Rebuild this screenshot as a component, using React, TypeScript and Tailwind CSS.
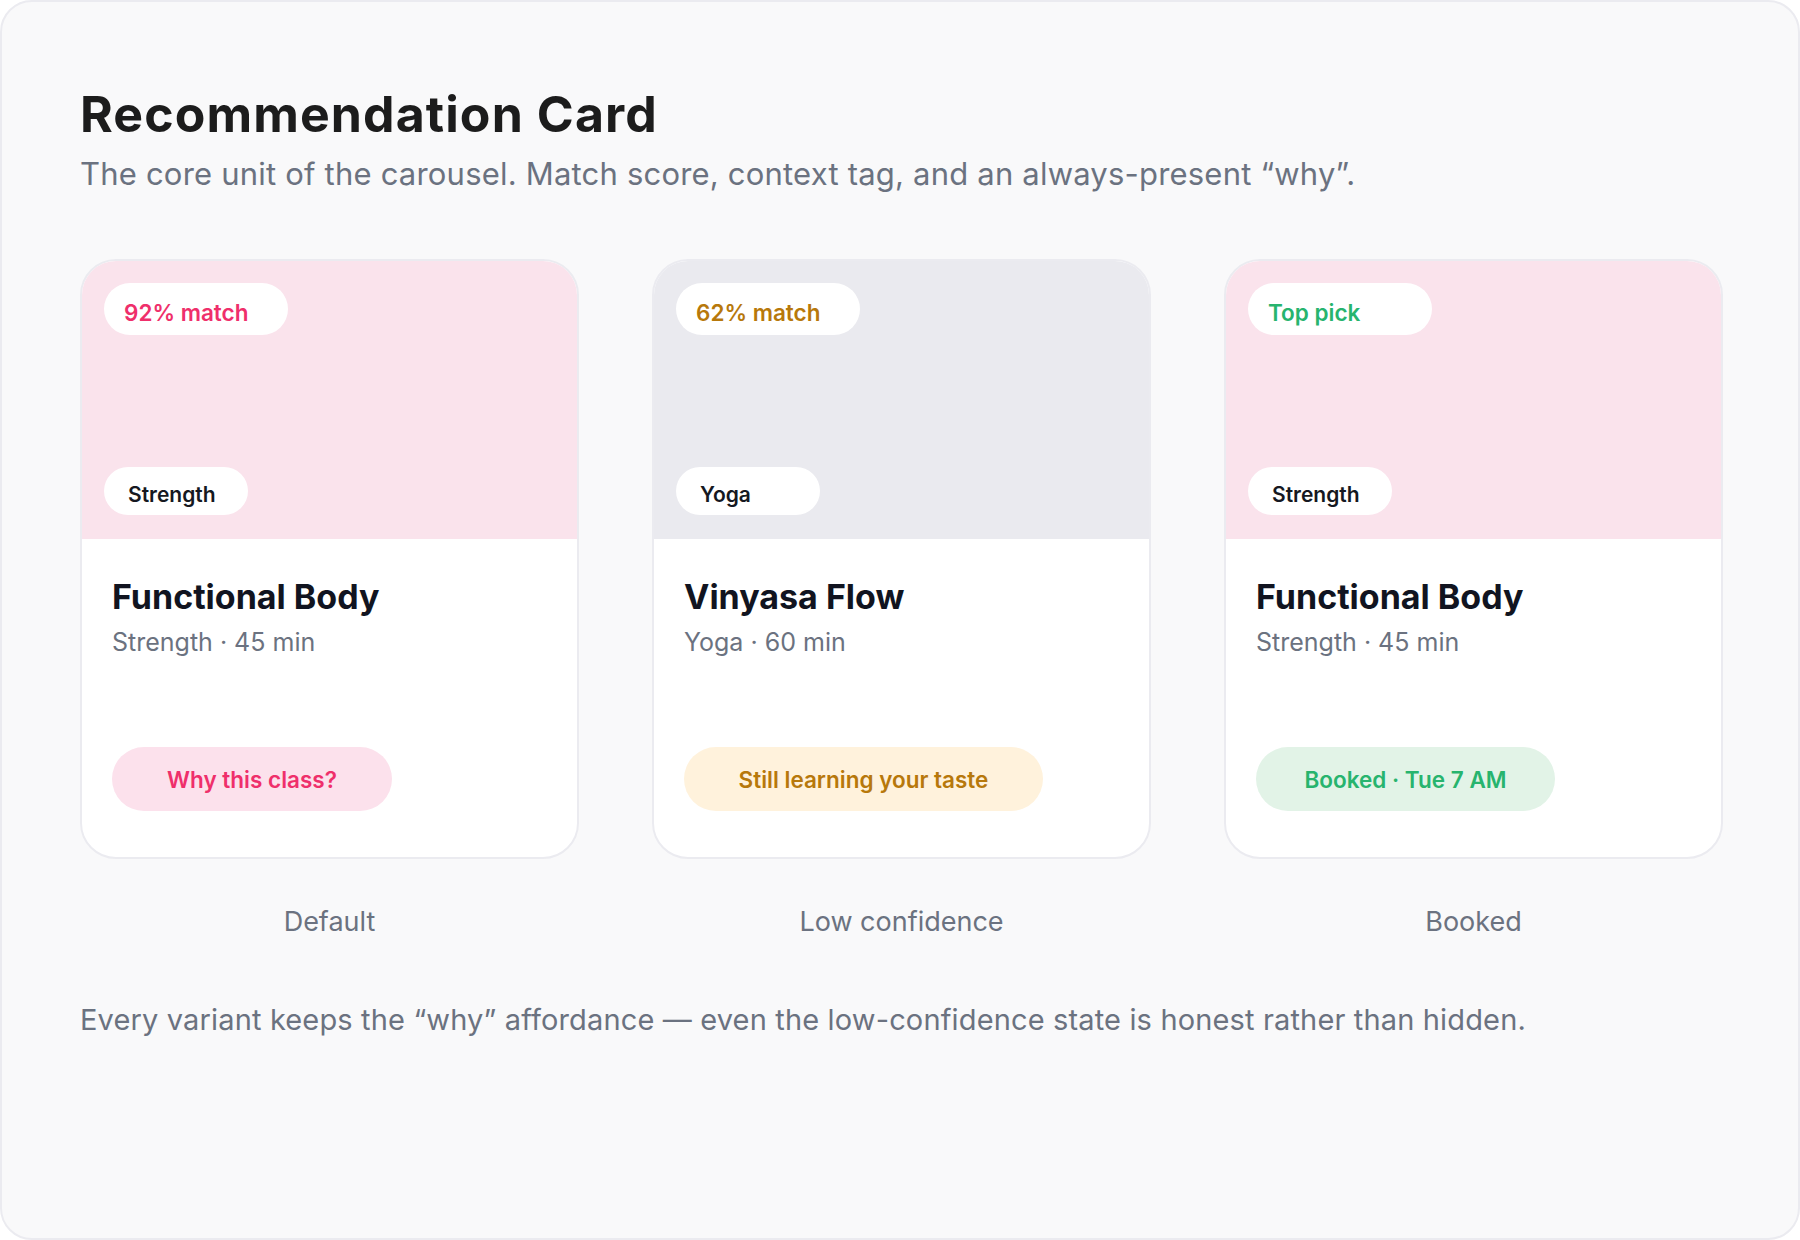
const variants = [
  {
    label: 'Default',
    badge: '92% match',
    badgeText: 'text-[#ef2f6b]',
    imageBg: 'bg-[#fae3ec]',
    tag: 'Strength',
    title: 'Functional Body',
    meta: 'Strength · 45 min',
    cta: 'Why this class?',
    ctaStyle: 'w-[280px] bg-[#fce1ec] text-[#ef2f6b]',
  },
  {
    label: 'Low confidence',
    badge: '62% match',
    badgeText: 'text-[#b7780b]',
    imageBg: 'bg-[#eaeaef]',
    tag: 'Yoga',
    title: 'Vinyasa Flow',
    meta: 'Yoga · 60 min',
    cta: 'Still learning your taste',
    ctaStyle: 'w-[359px] bg-[#fff2dc] text-[#b7780b]',
  },
  {
    label: 'Booked',
    badge: 'Top pick',
    badgeText: 'text-[#27b46e]',
    imageBg: 'bg-[#fae3ec]',
    tag: 'Strength',
    title: 'Functional Body',
    meta: 'Strength · 45 min',
    cta: 'Booked · Tue 7 AM',
    ctaStyle: 'w-[299px] bg-[#e2f3e7] text-[#27b46e]',
  },
];

type Variant = (typeof variants)[number];

function RecCard({ v }: { v: Variant }) {
  return (
    <div className="flex flex-col">
      <div className="flex h-[600px] flex-col overflow-hidden rounded-[36px] border-2 border-[#ebebf0] bg-white">
        <div className={`flex h-[278px] shrink-0 flex-col justify-between p-[22px] pb-[24px] ${v.imageBg}`}>
          <span
            className={`flex h-[52px] w-[184px] items-center rounded-full bg-white pt-[7px] pl-5 text-[22.5px] font-semibold ${v.badgeText}`}
          >
            {v.badge}
          </span>
          <span className="flex h-[48px] w-[144px] items-center rounded-full bg-white pt-[8px] pl-6 text-[21px] font-semibold text-[#151821]">
            {v.tag}
          </span>
        </div>
        <div className="flex flex-1 flex-col px-[30px] pt-[38px] pb-[46px]">
          <h3 className="text-[34px] leading-[40px] font-bold text-[#111420]">{v.title}</h3>
          <p className="mt-[9px] text-[25px] leading-[32px] text-[#6b7280]">{v.meta}</p>
          <button
            className={`mt-auto flex h-[64px] items-center justify-center rounded-full pt-[2px] text-[22.5px] font-semibold ${v.ctaStyle}`}
          >
            {v.cta}
          </button>
        </div>
      </div>
      <p className="mt-[47px] text-center text-[27px] leading-[32px] text-[#6b7280]">{v.label}</p>
    </div>
  );
}

export default function App() {
  return (
    <div className="h-[1240px] w-full bg-white font-['Inter',sans-serif]">
      <div className="h-full rounded-[32px] border-2 border-[#ebebf0] bg-[#f9f9fa] pt-[84px] pr-[75px] pl-[78px]">
        <h1 className="text-[50px] leading-[56px] font-bold tracking-[1.1px] text-[#1c1c1c]">
          Recommendation Card
        </h1>
        <p className="mt-3 text-[31px] leading-[40px] tracking-[0.2px] text-[#6b7280]">
          The core unit of the carousel. Match score, context tag, and an always-present “why”.
        </p>

        <div className="mt-[65px] grid grid-cols-3 gap-[73px]">
          {variants.map((v) => (
            <RecCard key={v.label} v={v} />
          ))}
        </div>

        <p className="mt-[64px] text-[29px] leading-[36px] tracking-[0.15px] text-[#6b7280]">
          Every variant keeps the “why” affordance — even the low-confidence state is honest rather than hidden.
        </p>
      </div>
    </div>
  );
}
